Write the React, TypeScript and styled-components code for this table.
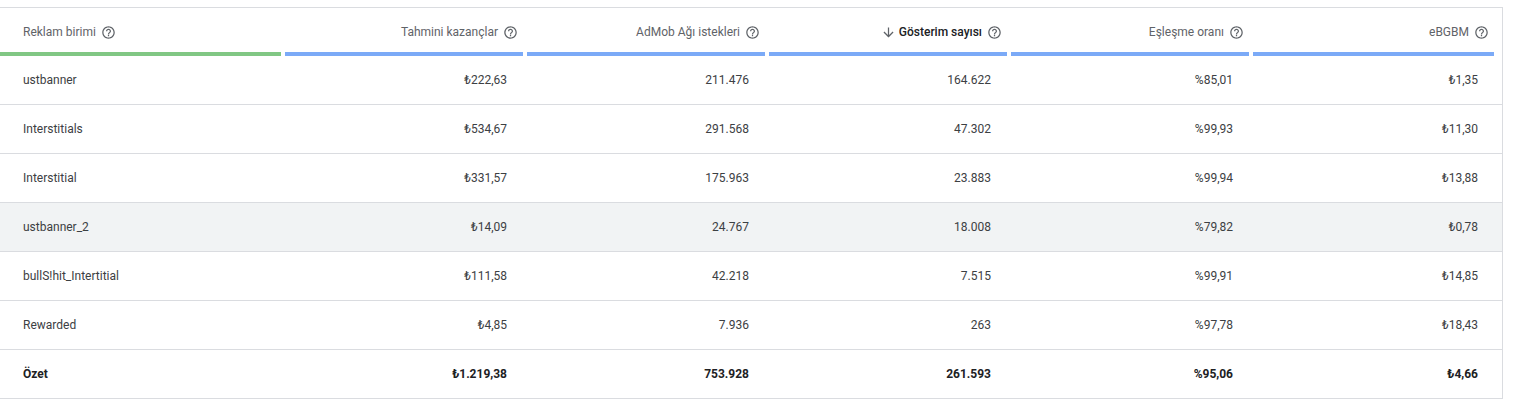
import React from "react";
import styled, { createGlobalStyle } from "styled-components";

const GlobalStyle = createGlobalStyle`
  html, body {
    margin: 0;
    padding: 0;
    background: #ffffff;
  }
  body {
    font-family: Roboto, "Noto Sans", "DejaVu Sans", sans-serif;
    -webkit-font-smoothing: antialiased;
  }
`;

const COLS = "285px 242px 242px 242px 242px 245px 4px";

const Table = styled.div`
  margin-top: 7px;
  width: 1502px;
  border-top: 1px solid #dadce0;
  border-right: 1px solid #dadce0;
`;

const HeaderRow = styled.div`
  display: grid;
  grid-template-columns: ${COLS};
`;

const HeaderCell = styled.div`
  display: flex;
  flex-direction: column;
`;

const HeaderContent = styled.div<{ $first?: boolean }>`
  height: 44px;
  box-sizing: border-box;
  padding-top: 4px;
  display: flex;
  align-items: center;
  justify-content: ${(p) => (p.$first ? "flex-start" : "flex-end")};
  padding-left: ${(p) => (p.$first ? "23px" : "0")};
  padding-right: ${(p) => (p.$first ? "0" : "9px")};
  font-size: 12px;
  color: #5f6368;
  white-space: nowrap;
`;

const HeaderLabel = styled.span<{ $active?: boolean }>`
  font-weight: ${(p) => (p.$active ? 500 : 400)};
  color: ${(p) => (p.$active ? "#202124" : "#5f6368")};
`;

const Bar = styled.div<{ $color: string }>`
  height: 4px;
  margin-right: 4px;
  background: ${(p) => p.$color};
`;

const IconWrap = styled.span<{ $gap: "left" | "right" }>`
  display: inline-flex;
  width: 15px;
  height: 15px;
  margin-left: ${(p) => (p.$gap === "left" ? "5px" : "0")};
  margin-right: ${(p) => (p.$gap === "right" ? "3px" : "0")};
  color: #5f6368;
  svg {
    width: 15px;
    height: 15px;
    fill: currentColor;
  }
`;

const DataRow = styled.div<{ $highlight?: boolean }>`
  display: grid;
  grid-template-columns: ${COLS};
  height: 48px;
  border-bottom: 1px solid #dadce0;
  background: ${(p) => (p.$highlight ? "#f1f3f4" : "#ffffff")};
`;

const Cell = styled.div<{ $first?: boolean; $bold?: boolean }>`
  display: flex;
  align-items: center;
  justify-content: ${(p) => (p.$first ? "flex-start" : "flex-end")};
  padding-left: ${(p) => (p.$first ? "23px" : "0")};
  padding-right: ${(p) => (p.$first ? "0" : "20px")};
  font-size: 12px;
  font-weight: ${(p) => (p.$bold ? 700 : 400)};
  color: ${(p) => (p.$bold ? "#202124" : "#3c4043")};
  white-space: nowrap;
`;

const HelpIcon = () => (
  <IconWrap $gap="left">
    <svg viewBox="0 0 24 24">
      <path d="M11 18h2v-2h-2v2zm1-16C6.48 2 2 6.48 2 12s4.48 10 10 10 10-4.48 10-10S17.52 2 12 2zm0 18c-4.41 0-8-3.59-8-8s3.59-8 8-8 8 3.59 8 8-3.59 8-8 8zm0-14c-2.21 0-4 1.790-4 4h2c0-1.1.9-2 2-2s2 .9 2 2c0 2-3 1.75-3 5h2c0-2.25 3-2.5 3-5 0-2.21-1.79-4-4-4z" />
    </svg>
  </IconWrap>
);

const ArrowIcon = () => (
  <IconWrap $gap="right">
    <svg viewBox="0 0 24 24">
      <path d="M20 12l-1.41-1.41L13 16.17V4h-2v12.17l-5.58-5.59L4 12l8 8 8-8z" />
    </svg>
  </IconWrap>
);

type Col = { label: string; color: string; active?: boolean };

const columns: Col[] = [
  { label: "Reklam birimi", color: "#81c784" },
  { label: "Tahmini kazançlar", color: "#7baaf7" },
  { label: "AdMob Ağı istekleri", color: "#7baaf7" },
  { label: "Gösterim sayısı", color: "#7baaf7", active: true },
  { label: "Eşleşme oranı", color: "#7baaf7" },
  { label: "eBGBM", color: "#7baaf7" },
];

const rows: string[][] = [
  ["ustbanner", "₺222,63", "211.476", "164.622", "%85,01", "₺1,35"],
  ["Interstitials", "₺534,67", "291.568", "47.302", "%99,93", "₺11,30"],
  ["Interstitial", "₺331,57", "175.963", "23.883", "%99,94", "₺13,88"],
  ["ustbanner_2", "₺14,09", "24.767", "18.008", "%79,82", "₺0,78"],
  ["bullS!hit_Intertitial", "₺111,58", "42.218", "7.515", "%99,91", "₺14,85"],
  ["Rewarded", "₺4,85", "7.936", "263", "%97,78", "₺18,43"],
];

const summary = ["Özet", "₺1.219,38", "753.928", "261.593", "%95,06", "₺4,66"];

export default function App() {
  return (
    <>
      <GlobalStyle />
      <Table>
        <HeaderRow>
          {columns.map((c, i) => (
            <HeaderCell key={c.label}>
              <HeaderContent $first={i === 0}>
                {c.active && <ArrowIcon />}
                <HeaderLabel $active={c.active}>{c.label}</HeaderLabel>
                <HelpIcon />
              </HeaderContent>
              <Bar $color={c.color} />
            </HeaderCell>
          ))}
          <div />
        </HeaderRow>
        {rows.map((r, ri) => (
          <DataRow key={r[0]} $highlight={ri === 3}>
            {r.map((v, i) => (
              <Cell key={i} $first={i === 0}>
                {v}
              </Cell>
            ))}
            <div />
          </DataRow>
        ))}
        <DataRow>
          {summary.map((v, i) => (
            <Cell key={i} $first={i === 0} $bold>
              {v}
            </Cell>
          ))}
          <div />
        </DataRow>
      </Table>
    </>
  );
}
